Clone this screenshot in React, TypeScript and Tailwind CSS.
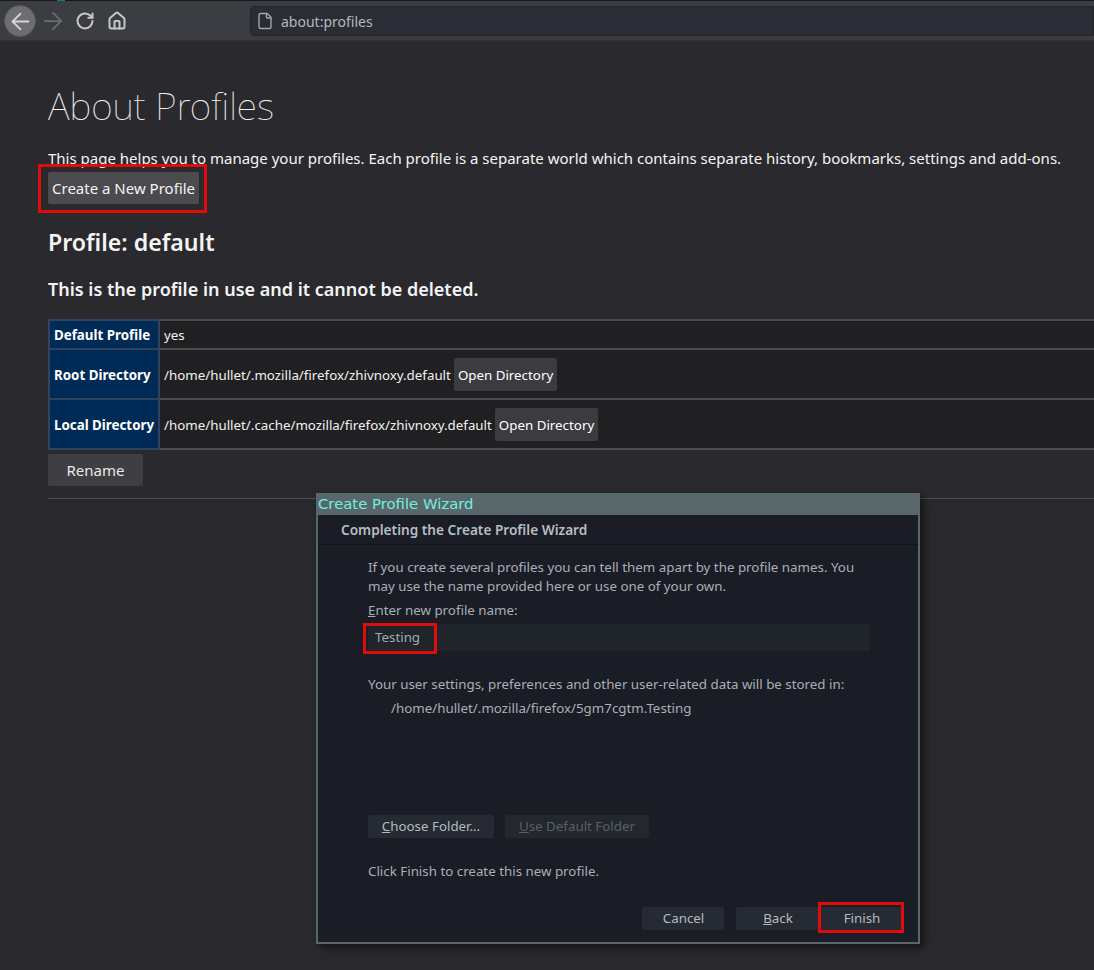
import { ArrowLeft, ArrowRight, RotateCw, House, File } from 'lucide-react';

const font = { fontFamily: '"Noto Sans", "Open Sans", sans-serif' };

function ProfileRow({ label, value, action, tall }: { label: string; value: string; action?: boolean; tall?: boolean }) {
  return (
    <tr>
      <th className={`w-[110px] border-2 border-[#33435f] bg-[#002b57] px-[4px] text-left text-[13.33px] font-bold text-white whitespace-nowrap ${tall ? 'pt-[3px]' : 'pt-[2px]'}`}>
        {label}
      </th>
      <td className={`border-2 border-[#4a4a4f] bg-[#202023] pl-[4px] text-[13.33px] text-[#f0f0f0] ${tall ? 'h-[50px]' : 'h-[29px]'}`}>
        <div className="flex items-center whitespace-nowrap">
          <span className={tall ? 'pt-[3px]' : 'pt-[2px]'}>{value}</span>
          {action && (
            <span className="ml-[3px] flex h-[33px] items-center rounded-[2px] bg-[#3c3c40] px-[4px] pt-[3px] text-white">Open Directory</span>
          )}
        </div>
      </td>
    </tr>
  );
}

function WizardButton({ children, width, disabled }: { children: React.ReactNode; width: string; disabled?: boolean }) {
  return (
    <div className={`flex h-[23px] items-center justify-center rounded-[2px] text-[13.33px] ${width} ${disabled ? 'bg-[#23272e] text-[#5b5f63]' : 'bg-[#262b33] text-[#b4bac0]'}`}>
      {children}
    </div>
  );
}

export default function App() {
  return (
    <div className="relative h-[970px] w-[1094px] overflow-hidden bg-[#2a2a2e]" style={font}>
      <div className="flex h-[41px] items-center border-t border-[#17181a] bg-[#3c3d42] shadow-[inset_0_-1px_0_#2f3034]">
        <div className="ml-[4px] flex h-[32px] w-[32px] items-center justify-center rounded-full border border-[#55565a] bg-[#6d6e72]">
          <ArrowLeft className="h-[27px] w-[27px] shrink-0 text-[#d6d6d8]" strokeWidth={1.6} />
        </div>
        <ArrowRight className="ml-[3px] h-[28px] w-[28px] text-[#6c6d71]" strokeWidth={1.5} />
        <RotateCw className="ml-[8px] h-[20px] w-[20px] text-[#c6c7c9]" strokeWidth={2.4} />
        <House className="ml-[12px] h-[20px] w-[20px] text-[#c6c7c9]" strokeWidth={2.4} />
        <div className="ml-[123px] flex h-[30px] flex-1 items-center rounded-l-[4px] border border-[#23252c] bg-[#2a2d35] pl-[5px] text-[14px] text-[#b6b8bc]">
          <File className="h-[18px] w-[18px] text-[#a5a7ab]" strokeWidth={1.8} />
          <span className="ml-[7px]">about:profiles</span>
        </div>
      </div>

      <main className="pl-[48px] text-white">
        <h1 className="mt-[40px] text-[37.2px] leading-[50px] font-thin text-[#f0f0f2]">
          About Profiles
        </h1>
        <p className="mt-[17px] text-[15px] leading-[20px] whitespace-nowrap text-[#f4f4f4]">
          This page helps you to manage your profiles. Each profile is a separate world which contains separate history, bookmarks, settings and add-ons.
        </p>
        <div className="mt-[4px] flex h-[32px] w-[151px] items-center justify-center rounded-[2px] bg-[#4a4a4f] text-[15px] text-[#f4f4f4]">
          Create a New Profile
        </div>
        <h2 className="mt-[23px] text-[23.15px] leading-[30px] font-semibold text-[#f4f4f4]">Profile: default</h2>
        <h3 className="mt-[20px] text-[18px] leading-[24px] font-semibold text-[#f4f4f4]">This is the profile in use and it cannot be deleted.</h3>

        <table className="mt-[18px] w-[1060px] table-fixed border-collapse">
          <tbody>
            <ProfileRow label="Default Profile" value="yes" />
            <ProfileRow label="Root Directory" value="/home/hullet/.mozilla/firefox/zhivnoxy.default" action tall />
            <ProfileRow label="Local Directory" value="/home/hullet/.cache/mozilla/firefox/zhivnoxy.default" action tall />
          </tbody>
        </table>

        <div className="mt-[4px] flex h-[32px] w-[95px] items-center justify-center rounded-[2px] bg-[#3f3f43] text-[15px] text-[#e8e8e8]">Rename</div>
        <div className="mt-[12px] h-px bg-[#4d4d51]" />
      </main>

      {/* tab highlight peeking over the toolbar */}
      <div className="absolute top-0 left-[57px] h-px w-[8px] bg-[#0a7f86]" />

      {/* wizard window */}
      <div className="absolute top-[493px] left-[316px] h-[451px] w-[604px] border-2 border-t-0 border-[#59676b] bg-[#1a1d25] shadow-[4px_4px_8px_rgba(0,0,0,0.55)]">
        <div className="-mx-[2px] flex h-[22px] items-center bg-[#59676b] pl-[2px] text-[14.85px] text-[#70efde]" style={{ fontFamily: '"DejaVu Sans", sans-serif' }}>
          Create Profile Wizard
        </div>
        <div className="flex h-[30px] items-center border-b border-[#12141a] pt-[2px] pl-[23px] text-[13.65px] font-semibold text-[#b7bdc3]">
          Completing the Create Profile Wizard
        </div>
        <div className="pr-[48px] pl-[50px] text-[13.33px] text-[#a9afb5]">
          <p className="mt-[13px] leading-[19px]">
            If you create several profiles you can tell them apart by the profile names. You may use the name provided here or use one of your own.
          </p>
          <p className="mt-[5px] leading-[19px]"><u>E</u>nter new profile name:</p>
          <div className="mt-[4px] flex h-[27px] items-center bg-[#20242b] pl-[7px] text-[#a3a8ad]">Testing</div>
          <p className="mt-[24px] leading-[19px]">Your user settings, preferences and other user-related data will be stored in:</p>
          <p className="mt-[5px] pl-[23px] leading-[19px]">/home/hullet/.mozilla/firefox/5gm7cgtm.Testing</p>
          <div className="mt-[97px] flex gap-[11px]">
            <WizardButton width="w-[126px]"><span><u>C</u>hoose Folder...</span></WizardButton>
            <WizardButton width="w-[144px]" disabled><span><u>U</u>se Default Folder</span></WizardButton>
          </div>
          <p className="mt-[24px] leading-[19px]">Click Finish to create this new profile.</p>
        </div>
        <div className="mt-[26px] flex justify-end pr-[14px]">
          <WizardButton width="w-[82px] mr-[12px]"><span className="pl-px">Cancel</span></WizardButton>
          <WizardButton width="w-[84px]"><span><u>B</u>ack</span></WizardButton>
          <WizardButton width="w-[84px]">Finish</WizardButton>
        </div>
      </div>

      {/* red annotation boxes */}
      <div className="absolute top-[164px] left-[38px] h-[49px] w-[169px] border-[3px] border-[#e00b0b]" />
      <div className="absolute top-[623px] left-[363px] h-[31px] w-[74px] border-[3px] border-[#e00b0b]" />
      <div className="absolute top-[902px] left-[818px] h-[31px] w-[86px] border-[3px] border-[#e00b0b]" />
    </div>
  );
}
